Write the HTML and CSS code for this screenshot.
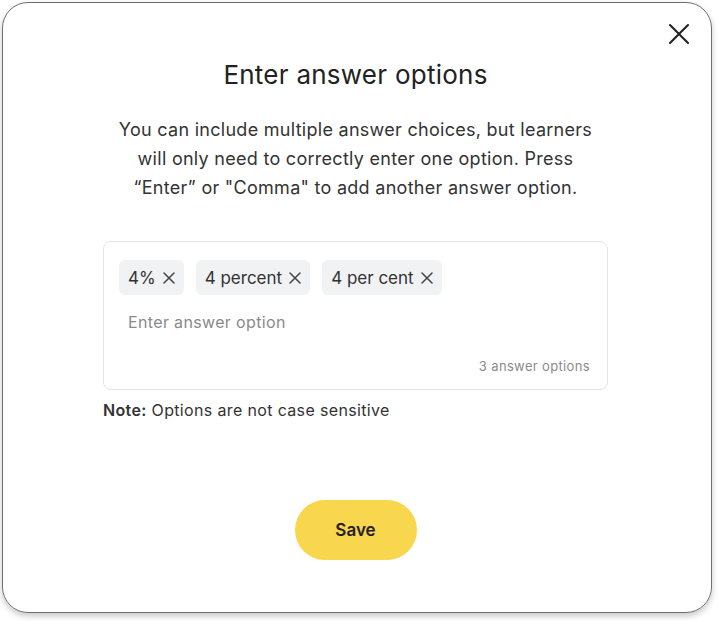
FILE: index.html
```html
<!DOCTYPE html>
<html>
<head>
<meta charset="utf-8">
<link rel="stylesheet" href="styles.css">
</head>
<body>
<div class="modal">
  <button class="close" aria-label="Close">
    <svg width="22" height="22" viewBox="0 0 22 22"><path d="M2 2 L20 20 M20 2 L2 20" stroke="#222" stroke-width="2.1" stroke-linecap="round"/></svg>
  </button>
  <h1 class="title">Enter answer options</h1>
  <p class="desc">You can include multiple answer choices, but learners will only need to correctly enter one option. Press “Enter” or "Comma" to add another answer option.</p>
  <div class="field">
    <div class="chips">
      <span class="chip">4%<svg class="x" width="12" height="12" viewBox="0 0 12 12"><path d="M1 1 L11 11 M11 1 L1 11" stroke="#444" stroke-width="1.5" stroke-linecap="round"/></svg></span>
      <span class="chip">4 percent<svg class="x" width="12" height="12" viewBox="0 0 12 12"><path d="M1 1 L11 11 M11 1 L1 11" stroke="#444" stroke-width="1.5" stroke-linecap="round"/></svg></span>
      <span class="chip">4 per cent<svg class="x" width="12" height="12" viewBox="0 0 12 12"><path d="M1 1 L11 11 M11 1 L1 11" stroke="#444" stroke-width="1.5" stroke-linecap="round"/></svg></span>
    </div>
    <input class="entry" type="text" placeholder="Enter answer option">
    <div class="count">3 answer options</div>
  </div>
  <p class="note"><b>Note:</b> Options are not case sensitive</p>
  <button class="save">Save</button>
</div>
</body>
</html>
```
FILE: styles.css
```css
html, body {
  margin: 0;
  padding: 0;
  background: #fff;
}
body {
  width: 720px;
  height: 621px;
  font-family: Inter, "Noto Sans", sans-serif;
  color: #2b2b2b;
}
.modal {
  position: relative;
  box-sizing: border-box;
  margin: 2px 0 0 2px;
  width: 710px;
  height: 611px;
  border: 1.5px solid #6e6e6e;
  border-radius: 26px;
  box-shadow: 0 3px 6px rgba(0, 0, 0, 0.22);
  display: flex;
  flex-direction: column;
  align-items: center;
  padding-top: 56px;
}
.close {
  position: absolute;
  top: 16px;
  right: 17px;
  width: 30px;
  height: 30px;
  padding: 0;
  border: 0;
  background: transparent;
  display: flex;
  align-items: center;
  justify-content: center;
}
.title {
  margin: 0;
  font-size: 26px;
  line-height: 32px;
  font-weight: 400;
  letter-spacing: 0.25px;
  color: #222;
  margin-left: -3px;
}
.desc {
  margin: 24px 0 0 -3px;
  width: 480px;
  text-align: center;
  font-size: 18px;
  line-height: 29px;
  letter-spacing: 0.28px;
  color: #333;
}
.field {
  box-sizing: border-box;
  margin: 39px 0 0 -3px;
  width: 505px;
  height: 149px;
  border: 1px solid #e4e4e4;
  border-radius: 8px;
  padding: 18px 17px 0 15px;
  display: flex;
  flex-direction: column;
}
.chips {
  display: flex;
  gap: 12px;
}
.chip {
  display: inline-flex;
  align-items: center;
  gap: 7px;
  height: 35px;
  padding: 0 9px;
  background: #f1f2f4;
  border-radius: 6px;
  font-size: 17px;
  color: #333;
}
.entry {
  margin-top: 15px;
  border: 0;
  outline: none;
  padding: 0 0 0 9px;
  height: 24px;
  font-family: Inter, "Noto Sans", sans-serif;
  font-size: 16px;
  letter-spacing: 0.35px;
  color: #333;
  background: transparent;
}
.entry::placeholder {
  color: #8a8a8a;
}
.count {
  margin-top: 24px;
  text-align: right;
  font-size: 13px;
  line-height: 16px;
  letter-spacing: 0.35px;
  color: #8a8a8a;
}
.note {
  margin: 10px 0 0 -3px;
  width: 505px;
  font-size: 16px;
  line-height: 20px;
  letter-spacing: 0.35px;
  color: #333;
}
.note b {
  font-weight: 600;
}
.save {
  margin: 80px 0 0 -3px;
  width: 122px;
  height: 60px;
  border: 0;
  border-radius: 30px;
  background: #f8d64e;
  font-family: Inter, "Noto Sans", sans-serif;
  font-size: 17px;
  font-weight: 600;
  color: #222;
}
```
